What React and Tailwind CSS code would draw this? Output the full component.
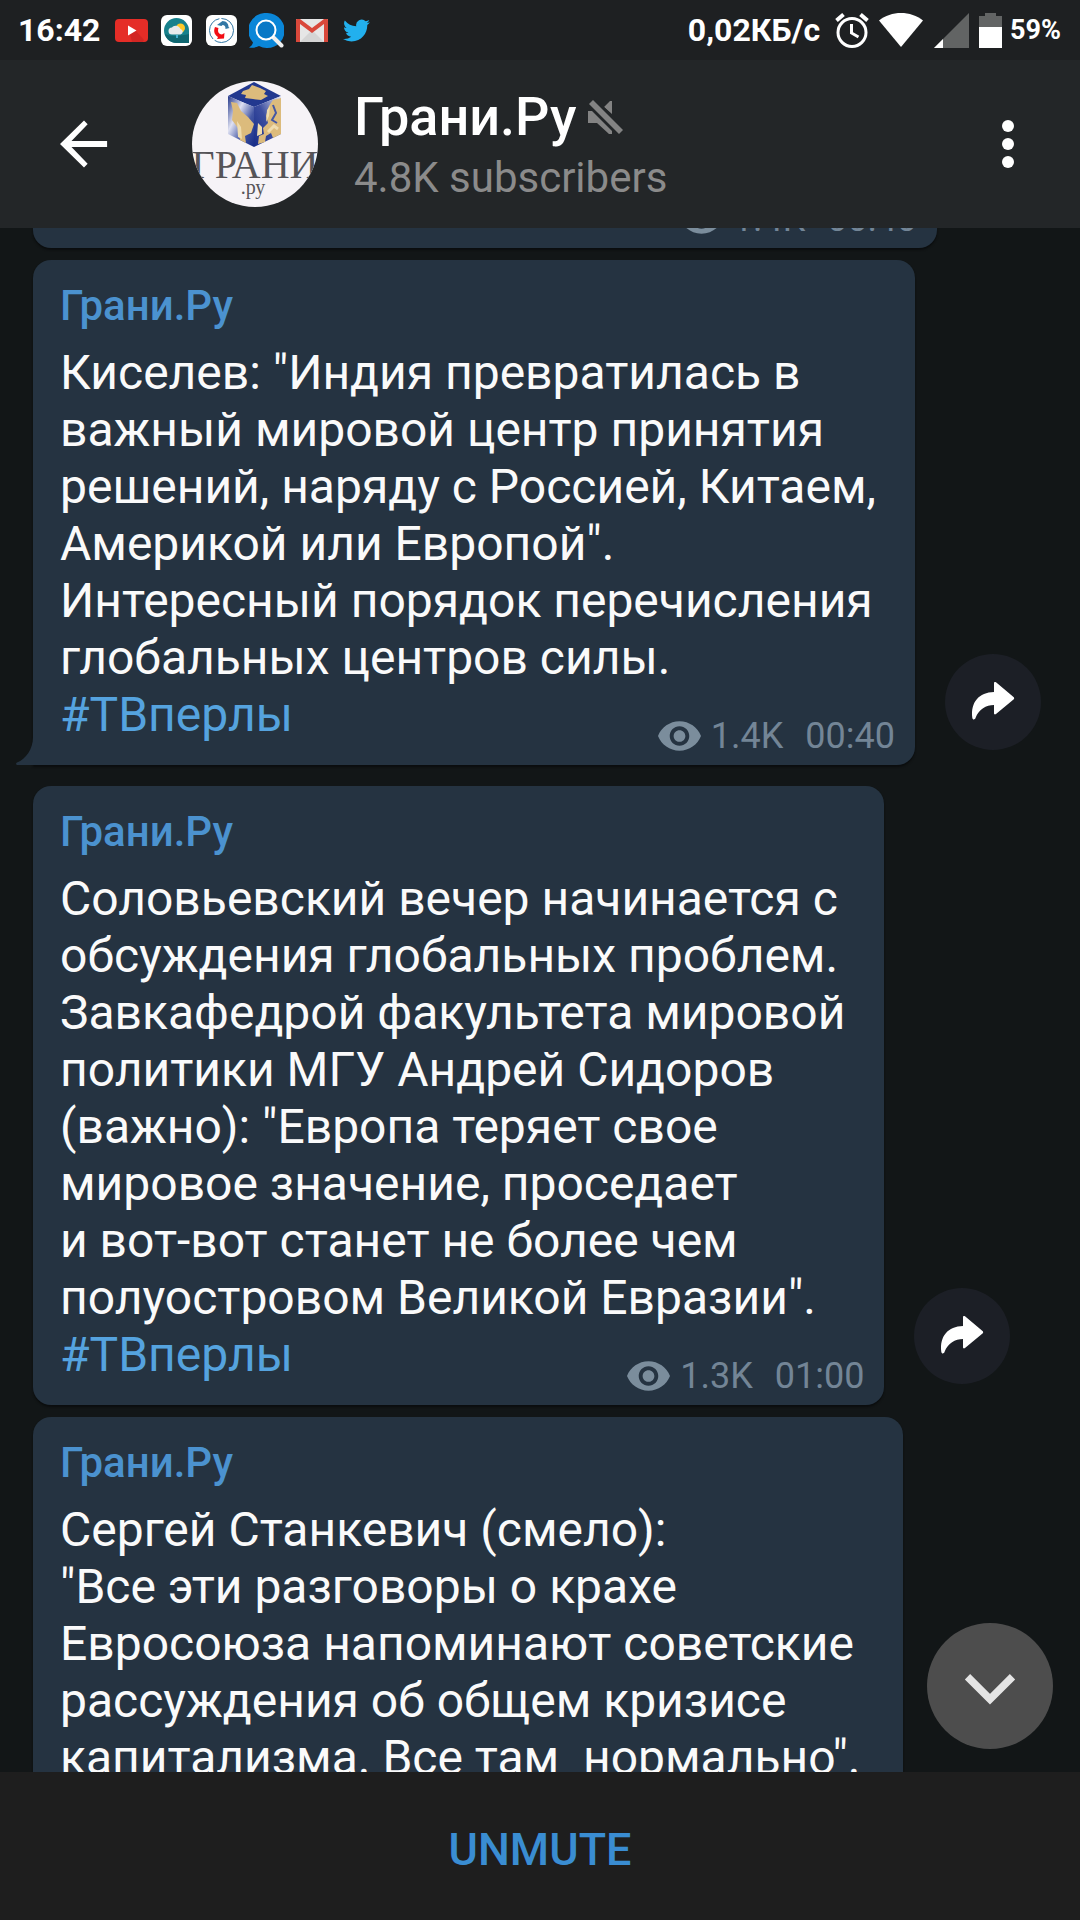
import { ChevronDown } from 'lucide-react';

const messages = [
  {
    id: 1,
    text: 'Киселев: "Индия превратилась в\nважный мировой центр принятия\nрешений, наряду с Россией, Китаем,\nАмерикой или Европой".\nИнтересный порядок перечисления\nглобальных центров силы.',
    tag: '#ТВперлы',
    views: '1.4K',
    time: '00:40',
    tail: true
  },
  {
    id: 2,
    text: 'Соловьевский вечер начинается с\nобсуждения глобальных проблем.\nЗавкафедрой факультета мировой\nполитики МГУ Андрей Сидоров\n(важно): "Европа теряет свое\nмировое значение, проседает\nи вот-вот станет не более чем\nполуостровом Великой Евразии".',
    tag: '#ТВперлы',
    views: '1.3K',
    time: '01:00'
  },
  {
    id: 3,
    text: 'Сергей Станкевич (смело):\n"Все эти разговоры о крахе\nЕвросоюза напоминают советские\nрассуждения об общем кризисе\nкапитализма. Все там  нормально".',
    width: 'min-w-[870px]'
  }
];

function StatusBar() {
  return (
    <div className="flex h-[60px] shrink-0 items-center justify-between bg-[#1e2022] pl-[18px] pr-[19px] font-bold text-white">
      <div className="flex items-center">
        <span className="mr-[15px] text-[32px] leading-[40px]">16:42</span>
        {/* YouTube */}
        <svg className="mr-[13px] h-[23px] w-[33px]" viewBox="0 0 33 23">
          <rect width="33" height="23" rx="4" fill="#e52d27" />
          <path d="M13 7l8 5 8 9-1 2H17z" fill="#bf2020" opacity=".5" />
          <path d="M13 6.500l8.500 5-8.500 5z" fill="#fff" />
        </svg>
        {/* Weather */}
        <svg className="mr-[14px] h-[31px] w-[31px]" viewBox="0 0 31 31">
          <rect width="31" height="31" rx="6" fill="#fff" />
          <path d="M15.500 3A12.500 12.500 0 0 1 28 15.500V28H15.500a12.500 12.500 0 0 1 0-25z" fill="#17818c" />
          <path d="M4 19c6 3 16 2 24 0v9H15.500C10 28 5 24 4 19z" fill="#0f6670" />
          <circle cx="19.500" cy="13" r="4.500" fill="#ffc928" />
          <path d="M11 19.500a3.500 3.500 0 0 1 0-7 5 5 0 0 1 8.500 1.500 2.800 2.800 0 0 1 0 5.500z" fill="#e8eaec" />
          <path d="M16 20v3" stroke="#59c7f0" strokeWidth="1.500" />
        </svg>
        {/* Sync */}
        <svg className="mr-3 h-[31px] w-[31px]" viewBox="0 0 31 31">
          <rect width="31" height="31" rx="6" fill="#fff" />
          <circle cx="15.500" cy="15.500" r="12" fill="none" stroke="#3277a5" strokeWidth="1" strokeDasharray="26 2" />
          <path d="M11 10l5.500-4c4 0 6 3 6 6l1 1-4 1c0-3-1-4-3-4l-1 1z" fill="#3277a5" />
          <path d="M9 12c-2 5 0 8 3 10l-1 2 7-.500.500-5.500-2.500 1.500c-4-.500-4.500-3.500-3.500-6.500z" fill="#f20d14" />
        </svg>
        {/* Search bubble */}
        <svg className="mr-3 h-[35px] w-[35px]" viewBox="0 0 35 35">
          <path d="M18 0a17.500 17.500 0 1 1-8 33c-3 1.500-6 2-10 1.500 2-1 3.500-3 4-5A17.500 17.500 0 0 1 18 0z" fill="#0a86d8" />
          <path d="M24 24l8.500 8.500" stroke="#eee" strokeWidth="4" strokeLinecap="round" />
          <circle cx="17" cy="17" r="9.500" fill="#0878c6" stroke="#fff" strokeWidth="2" />
        </svg>
        {/* Gmail */}
        <svg className="mr-[15px] h-[23px] w-[32px]" viewBox="0 0 32 23">
          <rect width="32" height="23" rx="1" fill="#e6e6e6" />
          <path d="M4 23l12-12 12 12z" fill="#d4d4d4" />
          <path d="M0 1a1 1 0 0 1 1-1h3l12 9L28 0h3a1 1 0 0 1 1 1v22h-4V5L16 14 4 5v18H0z" fill="#d9483b" />
        </svg>
        {/* Twitter */}
        <svg className="h-[23px] w-[27px]" viewBox="0 0 24 20">
          <path d="M23.950 2.600a10 10 0 0 1-2.820.770 4.960 4.960 0 0 0 2.160-2.720 9.900 9.900 0 0 1-3.120 1.180 4.920 4.920 0 0 0-8.380 4.480A13.980 13.980 0 0 1 1.640 1.170a4.920 4.920 0 0 0 1.520 6.570 4.900 4.900 0 0 1-2.230-.610v.060a4.920 4.920 0 0 0 3.950 4.830 5 5 0 0 1-2.210.080 4.930 4.930 0 0 0 4.600 3.420A9.870 9.870 0 0 1 0 17.540a13.940 13.940 0 0 0 7.550 2.210c9.050 0 14-7.500 14-13.980v-.640a9.930 9.930 0 0 0 2.400-2.530z" fill="#22b0ee" />
        </svg>
      </div>
      <div className="flex items-center">
        <span className="mr-[15px] text-[32px] leading-[40px]">0,02КБ/с</span>
        {/* Alarm */}
        <svg className="mr-[10px] h-[35px] w-[34px]" viewBox="0 0 34 35" fill="none" stroke="#fff">
          <circle cx="17" cy="19.500" r="14" strokeWidth="3" />
          <path d="M1.500 7.500l7-6M32.500 7.500l-7-6" strokeWidth="4" />
          <path d="M16.500 11v9l7 4" strokeWidth="3" />
        </svg>
        {/* Wifi */}
        <svg className="mr-[11px] h-[34px] w-[44px]" viewBox="0 0 44 34">
          <path d="M0 7.500C12-2.500 32-2.500 44 7.500L22 34z" fill="#fff" />
        </svg>
        {/* Signal */}
        <svg className="mr-[10px] h-[35px] w-[35px]" viewBox="0 0 35 35">
          <path d="M35 0v35H0z" fill="#626464" />
          <path d="M9 26v9H0z" fill="#fff" />
        </svg>
        {/* Battery */}
        <svg className="mr-2 h-[35px] w-[23px]" viewBox="0 0 23 35">
          <path d="M6 0h11v3h6v12H0V3h6z" fill="#626464" />
          <path d="M0 14h23v21H0z" fill="#fff" />
        </svg>
        <span className="text-[27px] leading-[40px]">59%</span>
      </div>
    </div>
  );
}

function Avatar() {
  return (
    <svg className="ml-[72px] h-[126px] w-[126px] shrink-0 rounded-full" viewBox="0 0 126 126">
      <defs>
        <linearGradient id="left-face" x1="0" y1="0" x2="1" y2="1">
          <stop offset="0" stopColor="#24378a" />
          <stop offset=".35" stopColor="#dfe1f2" />
          <stop offset=".65" stopColor="#4457a4" />
          <stop offset="1" stopColor="#162b86" />
        </linearGradient>
        <linearGradient id="right-face" x1="0" y1="1" x2="1" y2="0">
          <stop offset="0" stopColor="#172c88" />
          <stop offset=".5" stopColor="#3c4ea0" />
          <stop offset="1" stopColor="#e6e7f4" />
        </linearGradient>
      </defs>
      <rect width="126" height="126" fill="#f6f3f7" />
      <path d="M62 1l27 14-27 11-26-11z" fill="#22388f" />
      <path d="M36 15l26 11v40L36 53z" fill="url(#left-face)" />
      <path d="M62 26l27-11v38L62 66z" fill="url(#right-face)" />
      <path d="M51 10l6-2 3-4 8 3 6 3-2 3 4 2-7 4-8-1-8-1 1-3-5-1z" fill="#dcbb7c" />
      <path d="M39 21l6 1 4 8 7 6 6 7-3 9-6 3 1 7-6-3-2-12-6-8 1-9z" fill="#dcbb7c" />
      <path d="M45 40l4 6 1 12-4-2z" fill="#efdcae" />
      <path d="M89 17v36l-8 4-2-5-5 3-1 6-7 2 1-8 5-2-1-6 5-5-2-7 3-10 4-6z" fill="#dcbb7c" />
      <path d="M66 42l4 4v7l-5 2zM75 29l3-4-1 10-3 6z" fill="#efdcae" />
      <path d="M81 24l3 8-4 7 5 3" fill="none" stroke="#4457a4" strokeWidth="2" />
      <path d="M76 51l6-6 4 3" fill="none" stroke="#efdcae" strokeWidth="3" />
      <g fill="#555458" textAnchor="middle" className="font-['Liberation_Serif',serif]">
        <text x="63" y="97" fontSize="40">ГРАНИ</text>
        <text x="61" y="113" fontSize="20">.ру</text>
      </g>
    </svg>
  );
}

function Header() {
  return (
    <header className="flex h-[168px] shrink-0 items-center bg-[#232628] pl-12 pr-9">
      <button type="button" aria-label="Back" className="shrink-0">
        <svg className="h-[72px] w-[72px]" viewBox="0 0 24 24" fill="#fff">
          <path d="M19.700 11H7.830l5.390-5.590L12 4.200 4 12l8 7.800 1.210-1.210L7.830 13h11.870z" />
        </svg>
      </button>
      <Avatar />
      <div className="ml-9 grow">
        <h1 className="flex items-center gap-3 text-[54px] font-medium leading-[64px] text-white">
          Грани.Ру
          <svg className="h-[36px] w-[36px]" viewBox="0 0 36 36" fill="#838383">
            <path d="M0 12h4l20 20v3h-3l-12-11H0zM16 8l6-6h2v13z" />
            <path d="M5 1L35 31l-4 4L1 5z" />
            <path d="M7 0L36 29M0 6L29 35" stroke="#232628" strokeWidth="1.500" />
          </svg>
        </h1>
        <p className="mt-1 text-[42px] leading-[50px] text-[#8b8b8b]">4.8K subscribers</p>
      </div>
      <button type="button" aria-label="More options">
        <svg className="h-[72px] w-[72px]" viewBox="0 0 72 72" fill="#fff">
          <circle cx="36" cy="18" r="6" />
          <circle cx="36" cy="36" r="6" />
          <circle cx="36" cy="54" r="6" />
        </svg>
      </button>
    </header>
  );
}

function Meta({ views, time }) {
  return (
    <div className="absolute bottom-2 right-5 flex items-center text-[36px] leading-[42px] text-[#738596]">
      <svg className="mr-[10px] h-[30px] w-[43px]" viewBox="1 4.500 22 15" fill="#7b8d9c">
        <path d="M12 4.500C7 4.500 2.730 7.610 1 12c1.730 4.390 6 7.500 11 7.500s9.270-3.110 11-7.500c-1.730-4.390-6-7.500-11-7.500zM12 17c-2.760 0-5-2.240-5-5s2.240-5 5-5 5 2.240 5 5-2.240 5-5 5zm0-8c-1.660 0-3 1.340-3 3s1.340 3 3 3 3-1.340 3-3-1.340-3-3-3z" />
      </svg>
      <span>{views}</span>
      <span className="ml-[22px]">{time}</span>
    </div>
  );
}

function Message({ message }) {
  const { text, tag, views, time, tail, width } = message;

  return (
    <div className={`flex items-end ${tail ? 'mb-[21px]' : 'mb-3'}`}>
      <article
        className={`relative rounded-[18px] bg-[#253341] pb-[22px] pl-[27px] pr-[39px] pt-[21px] shadow-[0_2px_2px_#0b0d0e] ${tail ? 'rounded-bl-none' : ''} ${width || ''}`}
      >
        <h2 className="text-[42px] font-medium leading-[50px] text-[#4b92cf]">Грани.Ру</h2>
        <p className="mt-[13px] whitespace-pre-wrap text-[48px] leading-[57px] text-[#fafafa]">{text}</p>
        {tag && (
          <a href="#tag" className="block w-fit text-[48px] leading-[57px] text-[#55a3df]">{tag}</a>
        )}
        {views && <Meta views={views} time={time} />}
        {tail && (
          <svg className="absolute -left-[17px] bottom-0 h-[28px] w-[18px]" viewBox="0 0 18 28" fill="#253341">
            <path d="M18 0h-1C17 12 10 22 1 25.500c-1.500.700-1 2.500.500 2.500H18z" />
          </svg>
        )}
      </article>
      {tag && (
        <button
          type="button"
          aria-label="Share"
          className={`ml-[30px] shrink-0 rounded-full bg-[#1c1f26] ${tail ? 'mb-[15px]' : 'mb-[21px]'}`}
        >
          <svg className="h-24 w-24" viewBox="0 0 96 96" fill="#fff">
            <path d="M49 29c0-1 1-1.500 2-.700L68.500 43c.900.800.900 1.700 0 2.500L51 60c-1 .800-2 .400-2-.700V51c-8 0-15 4-18.500 13-.700 2-3 2-3.200-.300C25.500 48 34 38.500 49 38z" />
          </svg>
        </button>
      )}
    </div>
  );
}

export default function App() {
  return (
    <div className="flex h-screen flex-col overflow-hidden bg-[#121617] font-[Roboto,sans-serif]">
      <StatusBar />
      <Header />

      {/* Chat */}
      <main className="relative min-h-0 flex-1 overflow-hidden pl-[33px]">
        <div className="relative mb-3 h-5 w-[904px] rounded-b-[18px] bg-[#253341] shadow-[0_2px_2px_#0b0d0e]">
          <Meta views="1.4K" time="00:40" />
        </div>
        {messages.map(message => (
          <Message key={message.id} message={message} />
        ))}
        <button
          type="button"
          aria-label="Scroll to bottom"
          className="absolute bottom-[23px] right-[27px] flex h-[126px] w-[126px] items-center justify-center rounded-full bg-[#4d4d4d] text-[#e4e4e4]"
        >
          <ChevronDown className="mt-1 h-[90px] w-[90px]" strokeWidth={2} strokeLinecap="butt" strokeLinejoin="miter" />
        </button>
      </main>

      <button type="button" className="h-[148px] w-full shrink-0 bg-[#1e1e1e] pt-2 text-[45px] font-medium text-[#3a8dd2]">
        UNMUTE
      </button>
    </div>
  );
}
